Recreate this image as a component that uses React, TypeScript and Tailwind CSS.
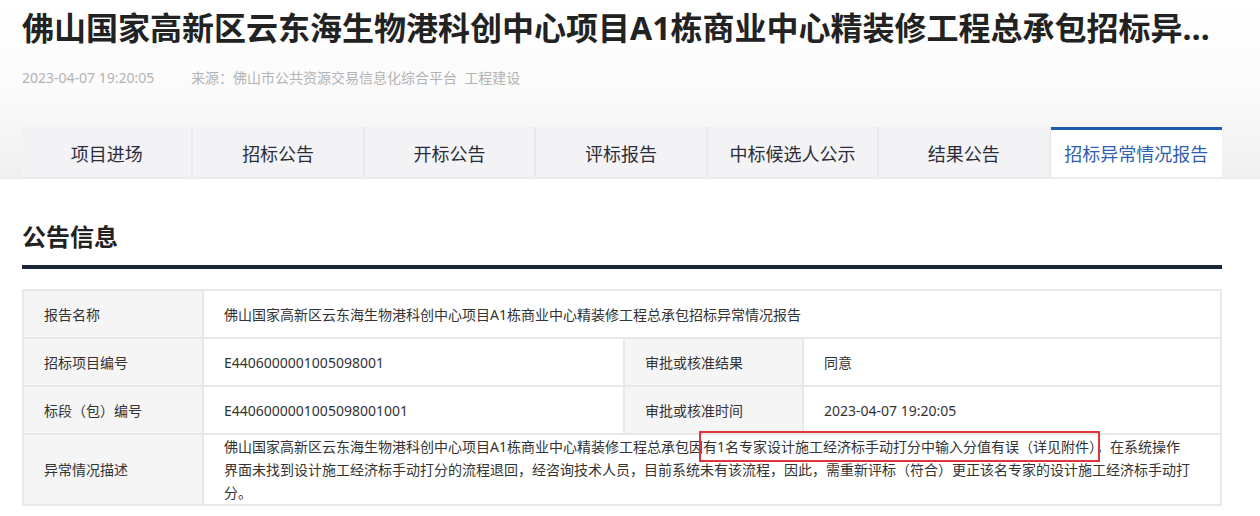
const tabs = ["项目进场", "招标公告", "开标公告", "评标报告", "中标候选人公示", "结果公告", "招标异常情况报告"];

const font = { fontFamily: '"Noto Sans", "Noto Sans CJK SC", sans-serif' };

export default function App() {
  return (
    <div className="min-h-[516px] bg-white text-[#333]" style={font}>
      <div className="border-b-2 border-[#ececec] bg-gradient-to-b from-white via-[#fbfbfb] to-[#f0f0f0]">
        <div className="ml-[22px] w-[1200px] pt-[4px]">
          <h1 className="truncate text-[32px] leading-[48px] font-bold text-[#222]">
            佛山国家高新区云东海生物港科创中心项目A1栋商业中心精装修工程总承包招标异常情况报告
          </h1>
          <div className="mt-[16px] flex text-[14px] leading-[20px] text-[#b3b3b3]">
            <span className="w-[169px]">2023-04-07 19:20:05</span>
            <span>来源：佛山市公共资源交易信息化综合平台&nbsp;&nbsp;工程建设</span>
          </div>
          <div className="mt-[39px] grid grid-cols-7">
            {tabs.map((t, i) => {
              const active = i === tabs.length - 1;
              return (
                <div
                  key={t}
                  className={
                    active
                      ? "flex h-[50px] items-center justify-center border-t-[3px] border-[#1d5bb3] bg-white pt-[2px] text-[18px] text-[#2f5fb0]"
                      : "flex h-[50px] items-center justify-center border-r-2 border-[#e9e9ec] bg-[#f3f3f5] pt-[5px] text-[18px] text-[#2b2d3a]"
                  }
                >
                  {t}
                </div>
              );
            })}
          </div>
        </div>
      </div>

      <div className="ml-[22px] w-[1200px]">
        <h2 className="mt-[42px] text-[24px] leading-[32px] font-bold text-[#222]">公告信息</h2>
        <div className="mt-[12px] h-[4px] bg-[#1c2438]" />

        <table className="mt-[20px] w-full border-collapse text-[14px] leading-[23px]">
          <colgroup>
            <col className="w-[180px]" />
            <col className="w-[421px]" />
            <col className="w-[179px]" />
            <col />
          </colgroup>
          <tbody>
            <tr className="h-[48px]">
              <Label>报告名称</Label>
              <Value colSpan={3}>佛山国家高新区云东海生物港科创中心项目A1栋商业中心精装修工程总承包招标异常情况报告</Value>
            </tr>
            <tr className="h-[48px]">
              <Label>招标项目编号</Label>
              <Value>E4406000001005098001</Value>
              <Label>审批或核准结果</Label>
              <Value>同意</Value>
            </tr>
            <tr className="h-[48px]">
              <Label>标段（包）编号</Label>
              <Value>E4406000001005098001001</Value>
              <Label>审批或核准时间</Label>
              <Value>2023-04-07 19:20:05</Value>
            </tr>
            <tr>
              <Label>异常情况描述</Label>
              <td colSpan={3} className="border-2 border-[#e8e8e8] pl-[20px] py-0 align-middle">
                <div className="w-[968px]">
                  佛山国家高新区云东海生物港科创中心项目A1栋商业中心精装修工程总承包因
                  <span className="py-[2px] outline-2 outline-offset-2 outline-[#e3343c]">
                    有1名专家设计施工经济标手动打分中输入分值有误（详见附件）
                  </span>
                  ，在系统操作界面未找到设计施工经济标手动打分的流程退回，经咨询技术人员，目前系统未有该流程，因此，需重新评标（符合）更正该名专家的设计施工经济标手动打分。
                </div>
              </td>
            </tr>
          </tbody>
        </table>
      </div>
    </div>
  );
}

function Label({ children }: { children: React.ReactNode }) {
  return <td className="border-2 border-[#e8e8e8] bg-[#f5f5f5] pl-[20px] align-middle">{children}</td>;
}

function Value({ children, colSpan }: { children: React.ReactNode; colSpan?: number }) {
  return (
    <td colSpan={colSpan} className="border-2 border-[#e8e8e8] pl-[20px] align-middle">
      {children}
    </td>
  );
}
